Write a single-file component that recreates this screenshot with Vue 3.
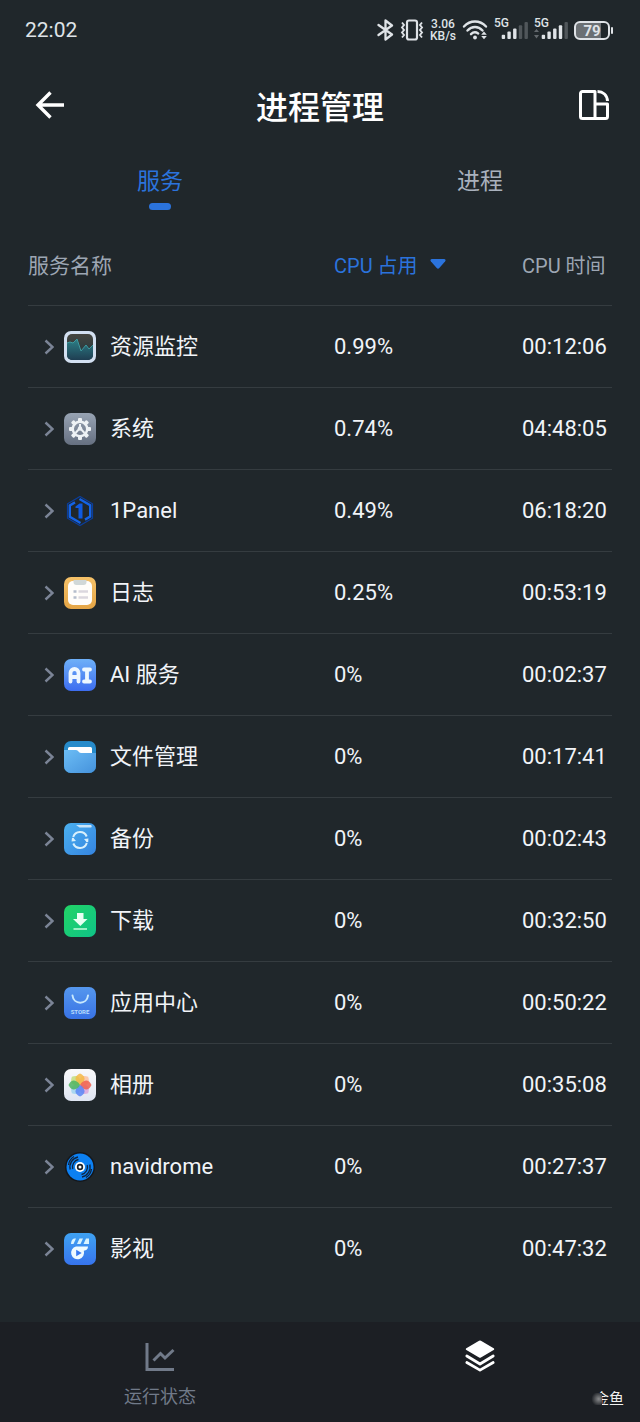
<template>
  <div class="screen">
    <div class="status">
      <time class="clock">22:02</time>
      <div class="signals">
        <svg class="bluetooth" width="18" height="22" viewBox="0 0 18 22" fill="none" stroke="currentColor" stroke-width="2.300" stroke-linejoin="round" stroke-linecap="round">
          <path d="M2.500 6 16 15.500 9.500 20.500V1.500L16 6.500 2.500 16" />
        </svg>
        <svg class="vibrate" width="24" height="22" viewBox="0 0 24 22" fill="none" stroke="currentColor" stroke-width="2.200">
          <rect x="7" y="1.500" width="10" height="19" rx="2" />
          <path d="M2 3.500 4 6 2 8.500 4 11 2 13.500 4 16 2 18.500M22 3.500 20 6 22 8.500 20 11 22 13.500 20 16 22 18.500" stroke-width="1.900" />
        </svg>
        <div class="speed"><span>3.06</span><span>KB/s</span></div>
        <svg class="wifi" width="26" height="20" viewBox="0 0 26 20" fill="none" stroke="currentColor" stroke-width="2.400" stroke-linecap="round">
          <path d="M2 6.500C8.200-.2 17.800-.2 24 6.500M5.500 10.500c4.300-4.600 10.700-4.600 15 0M9 14.200c2-2 5-2.200 7.200-.8" />
          <circle cx="13" cy="17.500" r="1.900" fill="currentColor" stroke="none" />
          <path d="m19.200 14.700 2.800-3.200 2.800 3.200zM19.200 16l2.800 3.200 2.800-3.200z" fill="currentColor" stroke="none" />
        </svg>
        <div v-for="sim in sims" :key="sim.id" class="sim">
          <span>5G</span>
          <svg width="34" height="20" viewBox="0 0 34 20" fill="currentColor">
            <path v-if="sim.arrows" d="m0 12 2.500-3 2.500 3zM0 15l2.500 3.500L5 15z" opacity=".35" />
            <rect v-for="n in 5" :key="n" :x="2 + n * 5.700" :y="18 - n * 3.200" width="3.400" :height="n * 3.200 + 1" rx="1" :opacity="n > sim.level ? 0.25 : 1" />
          </svg>
        </div>
        <div class="battery"><span>79</span></div>
      </div>
    </div>

    <header class="bar">
      <button type="button" class="icon-btn" aria-label="返回">
        <svg width="32" height="32" viewBox="0 0 32 32" fill="none" stroke="currentColor" stroke-width="3.400">
          <path d="M16.500 3.500 4 16l12.500 12.500M4 16h26" />
        </svg>
      </button>
      <h1>进程管理</h1>
      <button type="button" class="icon-btn" aria-label="布局">
        <svg width="32" height="32" viewBox="0 0 32 32" fill="none" stroke="currentColor" stroke-width="3" stroke-linejoin="round">
          <path d="M17 2.500H4.500a2 2 0 0 0-2 2v23a2 2 0 0 0 2 2H17zM17 15h12.500v12.500a2 2 0 0 1-2 2H17zM19.500 2.500c5.500 0 9.500 3.500 10 9.500" />
        </svg>
      </button>
    </header>

    <nav class="tabs">
      <button
        v-for="tab in tabs"
        :key="tab"
        type="button"
        :class="{ active: tab === activeTab }"
        @click="activeTab = tab"
      >{{ tab }}</button>
    </nav>

    <main>
      <table>
        <thead>
          <tr>
            <th>服务名称</th>
            <th class="col-cpu">
              <button type="button" class="sort">
                CPU 占用
                <svg width="16" height="10" viewBox="0 0 16 10" fill="currentColor"><path d="M2 0h12c1.500 0 2 1.300 1.200 2.300L9.300 9c-.8.9-1.800.9-2.600 0L.8 2.300C0 1.300.5 0 2 0z" /></svg>
              </button>
            </th>
            <th class="col-time">CPU 时间</th>
          </tr>
        </thead>
        <tbody>
          <tr v-for="service in services" :key="service.name">
            <td>
              <button type="button" class="service">
                <svg class="chevron" width="10" height="16" viewBox="0 0 10 16" fill="none" stroke="currentColor" stroke-width="2.400"><path d="m1.500 1.500 7 6.500-7 6.500" /></svg>
                <svg class="app" width="32" height="32" viewBox="0 0 32 32">
                  <g v-if="service.icon === 'monitor'">
                    <rect width="32" height="32" rx="7" fill="#d3e0f1" />
                    <rect x="3" y="3" width="26" height="26" rx="5" fill="url(#g-monitor)" />
                    <path d="M3 12l3-1 3 1 4-4 4 12 5-6 3 4 4-4v10a5 5 0 0 1-5 5H8a5 5 0 0 1-5-5z" fill="url(#g-wave)" />
                    <path d="M3 12l3-1 3 1 4-4 4 12 5-6 3 4 4-4" fill="none" stroke="#3d999f" />
                  </g>
                  <g v-else-if="service.icon === 'system'">
                    <rect width="32" height="32" rx="7" fill="url(#g-system)" />
                    <g fill="#eef2f5">
                      <rect v-for="n in 8" :key="n" x="14" y="5" width="4" height="5" rx="1" :transform="`rotate(${n * 45} 16 16)`" />
                    </g>
                    <circle cx="16" cy="16" r="7.200" fill="none" stroke="#eef2f5" stroke-width="2.400" />
                    <path d="M16 11v4.500M16 15l-4.500 5M16 15l4.500 5" fill="none" stroke="#eef2f5" stroke-width="2" />
                    <circle cx="16" cy="15.500" r="2.200" fill="#eef2f5" />
                  </g>
                  <g v-else-if="service.icon === 'panel'">
                    <path d="M16 1.500 28.500 8.800v14.400L16 30.500 3.500 23.200V8.800z" fill="none" stroke="#0b3e9c" stroke-width="1.200" />
                    <path d="M15.500 4 26.200 10.200v11.300L21 24.600M16.500 28 5.800 21.800V10.500L11 7.400" fill="none" stroke="#1463e6" stroke-width="2.400" />
                    <path d="M11.500 11.500 15.500 8.500h3v15h-4V13h-3z" fill="#0f5ae0" />
                  </g>
                  <g v-else-if="service.icon === 'log'">
                    <rect width="32" height="32" rx="7" fill="url(#g-log)" />
                    <rect x="4" y="4" width="24" height="24" rx="5" fill="#fffdfa" />
                    <path d="M9.500 3h13v2a3 3 0 0 1-3 3h-7a3 3 0 0 1-3-3z" fill="#d1d8d8" />
                    <path d="M9.500 14.500h3M9.500 20.500h3" stroke="#b5bdcc" stroke-width="2.500" />
                    <path d="M14.500 14.500h9.500M14.500 20.500h9.500" stroke="#dbd7de" stroke-width="2.500" />
                  </g>
                  <g v-else-if="service.icon === 'ai'">
                    <rect width="32" height="32" rx="7" fill="url(#g-ai)" />
                    <path d="M6.500 22.500v-8.500a4 4 0 0 1 8 0v8.500M6.500 18h8M20 10.500h6M20 22.500h6M23 10.500v12" fill="none" stroke="#edf7ff" stroke-width="3.800" stroke-linecap="round" />
                  </g>
                  <g v-else-if="service.icon === 'files'">
                    <rect width="32" height="32" rx="7" fill="#278bca" />
                    <path d="M4 9V7.500A1.500 1.500 0 0 1 5.500 6h9H26.500A1.500 1.500 0 0 1 28 7.500V15H4z" fill="#fff" />
                    <path d="M0 9h12c2.500 0 2.500 3 5 3h15v13a7 7 0 0 1-7 7H7a7 7 0 0 1-7-7z" fill="url(#g-files)" />
                  </g>
                  <g v-else-if="service.icon === 'backup'">
                    <rect width="32" height="32" rx="7" fill="url(#g-backup)" />
                    <path d="M12 2h15c1 1 1 2 0 2.500H15.500z" fill="#c9e5fa" />
                    <path d="M9.200 14a7.200 7.200 0 0 1 13.500-.5M22.800 20a7.200 7.200 0 0 1-13.500.5M8.800 18a8 8 0 0 1 .2-3M23.200 16a8 8 0 0 1 0 3" fill="none" stroke="#d9f0fc" stroke-width="2" />
                    <path d="m20 16 4.500-.5-1.500 4zM12 18l-4.500.5L9 14.500z" fill="#d9f0fc" />
                  </g>
                  <g v-else-if="service.icon === 'download'">
                    <rect width="32" height="32" rx="7" fill="url(#g-download)" />
                    <path d="M13 8h6.500v6h4l-7.200 7L9 14h4z" fill="#e9fff3" />
                    <path d="M9.500 24H23" stroke="#9aefc4" stroke-width="2" />
                  </g>
                  <g v-else-if="service.icon === 'store'">
                    <rect width="32" height="32" rx="7" fill="url(#g-store)" />
                    <path d="M8.500 8.500c1 9.500 14.500 9.500 15.500 0" fill="none" stroke="#c7e8fd" stroke-width="2" stroke-linecap="round" />
                    <text x="16" y="27" text-anchor="middle" class="store-label">STORE</text>
                  </g>
                  <g v-else-if="service.icon === 'photos'">
                    <rect width="32" height="32" rx="7" fill="url(#g-photos)" />
                    <path
                      v-for="petal in petals"
                      :key="petal.angle"
                      d="M16 16c-3.500-2-4.500-4.500-4.500-6.500 0-2.500 2.500-4 4.500-5 2 1 4.500 2.500 4.500 5 0 2-1 4.500-4.500 6.500z"
                      :fill="petal.color"
                      opacity=".85"
                      :transform="`rotate(${petal.angle} 16 16)`"
                    />
                  </g>
                  <g v-else-if="service.icon === 'navidrome'">
                    <circle cx="16" cy="16" r="15" fill="#14171c" />
                    <circle cx="16" cy="16" r="13.500" fill="#0c80f2" />
                    <g fill="none" stroke="#10233c" stroke-width="1.300">
                      <path d="M6.200 18.500A10.200 10.200 0 0 1 14 6M8.800 18A7.600 7.600 0 0 1 14.500 8.500M4.500 14A11.800 11.800 0 0 1 10 5.500M25.800 13.500A10.200 10.200 0 0 1 18 26M23.200 14A7.600 7.600 0 0 1 17.500 23.500M27.500 18A11.800 11.800 0 0 1 22 26.500" />
                    </g>
                    <circle cx="16" cy="16" r="5" fill="#fff" />
                    <circle cx="16" cy="16" r="3.200" fill="#1c2228" />
                    <circle cx="16" cy="16" r="1.500" fill="#fff" />
                  </g>
                  <g v-else>
                    <rect width="32" height="32" rx="7" fill="url(#g-video)" />
                    <path d="M7 11c0-2.500 1-5 3-5.500h2L9.500 11zM13 11l2.500-5.500h3.500L16.500 11zM19.500 11 22 5.500h3V11z" fill="#d8f3ff" />
                    <path d="M12 13.500h12c0 2.500-1.500 4-4.200 4.300A6.500 6.500 0 1 1 12 13.500z" fill="#eefaff" />
                    <path d="m12.200 16.800 5.500 3.200-5.500 3.200z" fill="#3779f0" />
                  </g>
                </svg>
                <span>{{ service.name }}</span>
              </button>
            </td>
            <td>{{ service.cpu }}</td>
            <td>{{ service.time }}</td>
          </tr>
        </tbody>
      </table>
    </main>

    <footer class="dock">
      <button type="button">
        <svg width="32" height="32" viewBox="0 0 32 32" fill="none" stroke="currentColor" stroke-width="3">
          <path d="M3 3v26.500h27M9.500 20.500l7-7 4.500 4.500 8.500-8" />
        </svg>
        <span>运行状态</span>
      </button>
      <button type="button" class="active" aria-label="进程管理">
        <svg width="32" height="32" viewBox="0 0 32 34" fill="currentColor">
          <path d="M15 .8a2 2 0 0 1 2 0l13.500 8a1 1 0 0 1 0 1.800L17 18.600a2 2 0 0 1-2 0L1.500 10.600a1 1 0 0 1 0-1.800z" />
          <path d="m2 17 14 8.500L30 17M2 24l14 8L30 24" fill="none" stroke="currentColor" stroke-width="3" stroke-linejoin="round" stroke-linecap="round" />
        </svg>
      </button>
      <div class="mark"><span>金鱼</span></div>
    </footer>

    <!-- shared gradients for the app icons -->
    <svg class="defs" width="0" height="0" aria-hidden="true">
      <defs>
        <linearGradient v-for="g in gradients" :id="g.id" :key="g.id" x1="0" y1="0" :x2="g.x || 0" y2="1">
          <stop offset="0" :stop-color="g.from" />
          <stop offset="1" :stop-color="g.to" />
        </linearGradient>
      </defs>
    </svg>
  </div>
</template>

<script setup>
import { ref } from 'vue';

const tabs = ['服务', '进程'];
const activeTab = ref('服务');

const sims = [
  { id: 1, level: 3, arrows: false },
  { id: 2, level: 4, arrows: true },
];

const services = ref([
  { name: '资源监控', icon: 'monitor', cpu: '0.99%', time: '00:12:06' },
  { name: '系统', icon: 'system', cpu: '0.74%', time: '04:48:05' },
  { name: '1Panel', icon: 'panel', cpu: '0.49%', time: '06:18:20' },
  { name: '日志', icon: 'log', cpu: '0.25%', time: '00:53:19' },
  { name: 'AI 服务', icon: 'ai', cpu: '0%', time: '00:02:37' },
  { name: '文件管理', icon: 'files', cpu: '0%', time: '00:17:41' },
  { name: '备份', icon: 'backup', cpu: '0%', time: '00:02:43' },
  { name: '下载', icon: 'download', cpu: '0%', time: '00:32:50' },
  { name: '应用中心', icon: 'store', cpu: '0%', time: '00:50:22' },
  { name: '相册', icon: 'photos', cpu: '0%', time: '00:35:08' },
  { name: 'navidrome', icon: 'navidrome', cpu: '0%', time: '00:27:37' },
  { name: '影视', icon: 'video', cpu: '0%', time: '00:47:32' },
]);

const petals = [
  { angle: 45, color: '#fbc0a0' },
  { angle: 135, color: '#dba6dc' },
  { angle: 225, color: '#9fd3ee' },
  { angle: 315, color: '#c4dd7c' },
  { angle: 0, color: '#f5b945' },
  { angle: 90, color: '#f0604f' },
  { angle: 180, color: '#5b86f5' },
  { angle: 270, color: '#4fb45f' },
];

const gradients = [
  { id: 'g-monitor', from: '#45453f', to: '#1d343f' },
  { id: 'g-wave', from: '#2c8087', to: '#1f3e52' },
  { id: 'g-system', from: '#97a3b3', to: '#667081' },
  { id: 'g-log', from: '#f6c269', to: '#e5a545' },
  { id: 'g-ai', from: '#6eb0f8', to: '#3d6df0' },
  { id: 'g-files', from: '#6cbdf5', to: '#4592dc', x: 1 },
  { id: 'g-backup', from: '#4bb0ef', to: '#3584e0', x: 1 },
  { id: 'g-download', from: '#22d466', to: '#0fc388', x: 1 },
  { id: 'g-store', from: '#5597ee', to: '#3872e4' },
  { id: 'g-photos', from: '#f9f9fb', to: '#dfe5f2' },
  { id: 'g-video', from: '#3fa2f2', to: '#3774ed' },
];
</script>

<style>
body {
  background: #20272b;
}
</style>

<style scoped>
.screen {
  display: flex;
  flex-direction: column;
  min-height: 100vh;
  background: #20272b;
  color: #f1f4f8;
  font-family: Roboto, "Noto Sans CJK SC", sans-serif;
  font-size: 22px;
}

button {
  padding: 0;
  border: 0;
  background: none;
  color: inherit;
  font: inherit;
  cursor: pointer;
}

svg {
  display: block;
  flex: none;
}

.status {
  display: flex;
  align-items: center;
  justify-content: space-between;
  height: 60px;
  padding: 0 30px 0 25px;
  color: #dfe3e7;
}

.clock {
  font-size: 21px;
}

.signals {
  display: flex;
  align-items: center;
  gap: 6px;
}

.speed {
  display: flex;
  flex-direction: column;
  align-items: center;
  font-size: 12px;
  font-weight: 500;
  line-height: 12px;
}

.sim {
  position: relative;
}

.sim span {
  position: absolute;
  top: -3px;
  left: 0;
  font-size: 12px;
  font-weight: 500;
  line-height: 12px;
}

.battery {
  position: relative;
  width: 32px;
  height: 15px;
  border: 2px solid #dfe3e7;
  border-radius: 6px;
  background: linear-gradient(to right, #6b7074 79%, transparent 79%);
  font-size: 15px;
  font-weight: 700;
  line-height: 16px;
  text-align: center;
}

.battery::after {
  content: "";
  position: absolute;
  top: 4px;
  right: -5px;
  width: 2px;
  height: 7px;
  border-radius: 1px;
  background: #dfe3e7;
}

.bar {
  display: flex;
  align-items: center;
  justify-content: space-between;
  height: 90px;
  padding: 0 30px;
  color: #fff;
}

.bar h1 {
  margin: 0;
  font-size: 32px;
  font-weight: 500;
}

.icon-btn {
  display: flex;
  justify-content: flex-end;
  width: 36px;
}

.tabs {
  display: flex;
  height: 60px;
}

.tabs button {
  display: flex;
  flex: 1;
  flex-direction: column;
  align-items: center;
  gap: 5px;
  padding-top: 16px;
  color: #a9b1bd;
  font-size: 23px;
  line-height: 32px;
}

.tabs .active {
  color: #2b73dc;
}

.tabs .active::after {
  content: "";
  width: 22px;
  height: 8px;
  border-radius: 4px;
  background: #2b73dc;
}

main {
  flex: 1;
  padding: 16px 28px 0;
}

table {
  width: 100%;
  border-collapse: collapse;
  table-layout: fixed;
}

th,
td {
  padding: 0;
  text-align: left;
  white-space: nowrap;
}

th {
  height: 76px;
  padding-bottom: 3px;
  color: #9da6b3;
  font-size: 21px;
  font-weight: 400;
}

td {
  height: 81px;
  border-top: 1px solid #353c40;
}

.col-cpu {
  width: 188px;
  font-size: 20px;
}

.col-time {
  width: 90px;
  font-size: 20px;
}

.sort {
  display: flex;
  align-items: center;
  gap: 12px;
  color: #2b73dc;
}

.service {
  display: flex;
  align-items: center;
  padding-left: 16px;
  line-height: 32px;
}

.chevron {
  margin-right: 10px;
  color: #7b8496;
}

.app {
  margin-right: 14px;
}

.store-label {
  fill: #b9dcfb;
  font-size: 6px;
  font-weight: 700;
}

.dock {
  position: relative;
  display: flex;
  height: 100px;
  background: #1c1f24;
}

.dock button {
  display: flex;
  flex: 1;
  flex-direction: column;
  align-items: center;
  gap: 11px;
  padding-top: 18px;
  color: #717a89;
  font-size: 18px;
  line-height: 28px;
}

.dock .active {
  color: #fff;
}

.mark {
  position: absolute;
  right: 16px;
  bottom: 12px;
  color: #f0f0f0;
  font-size: 15px;
  line-height: 22px;
}

.mark::before {
  content: "";
  position: absolute;
  top: 5px;
  left: -3px;
  width: 11px;
  height: 12px;
  background: radial-gradient(circle at 70% 50%, #8a8b8d, #1c1f24 75%);
}
</style>
